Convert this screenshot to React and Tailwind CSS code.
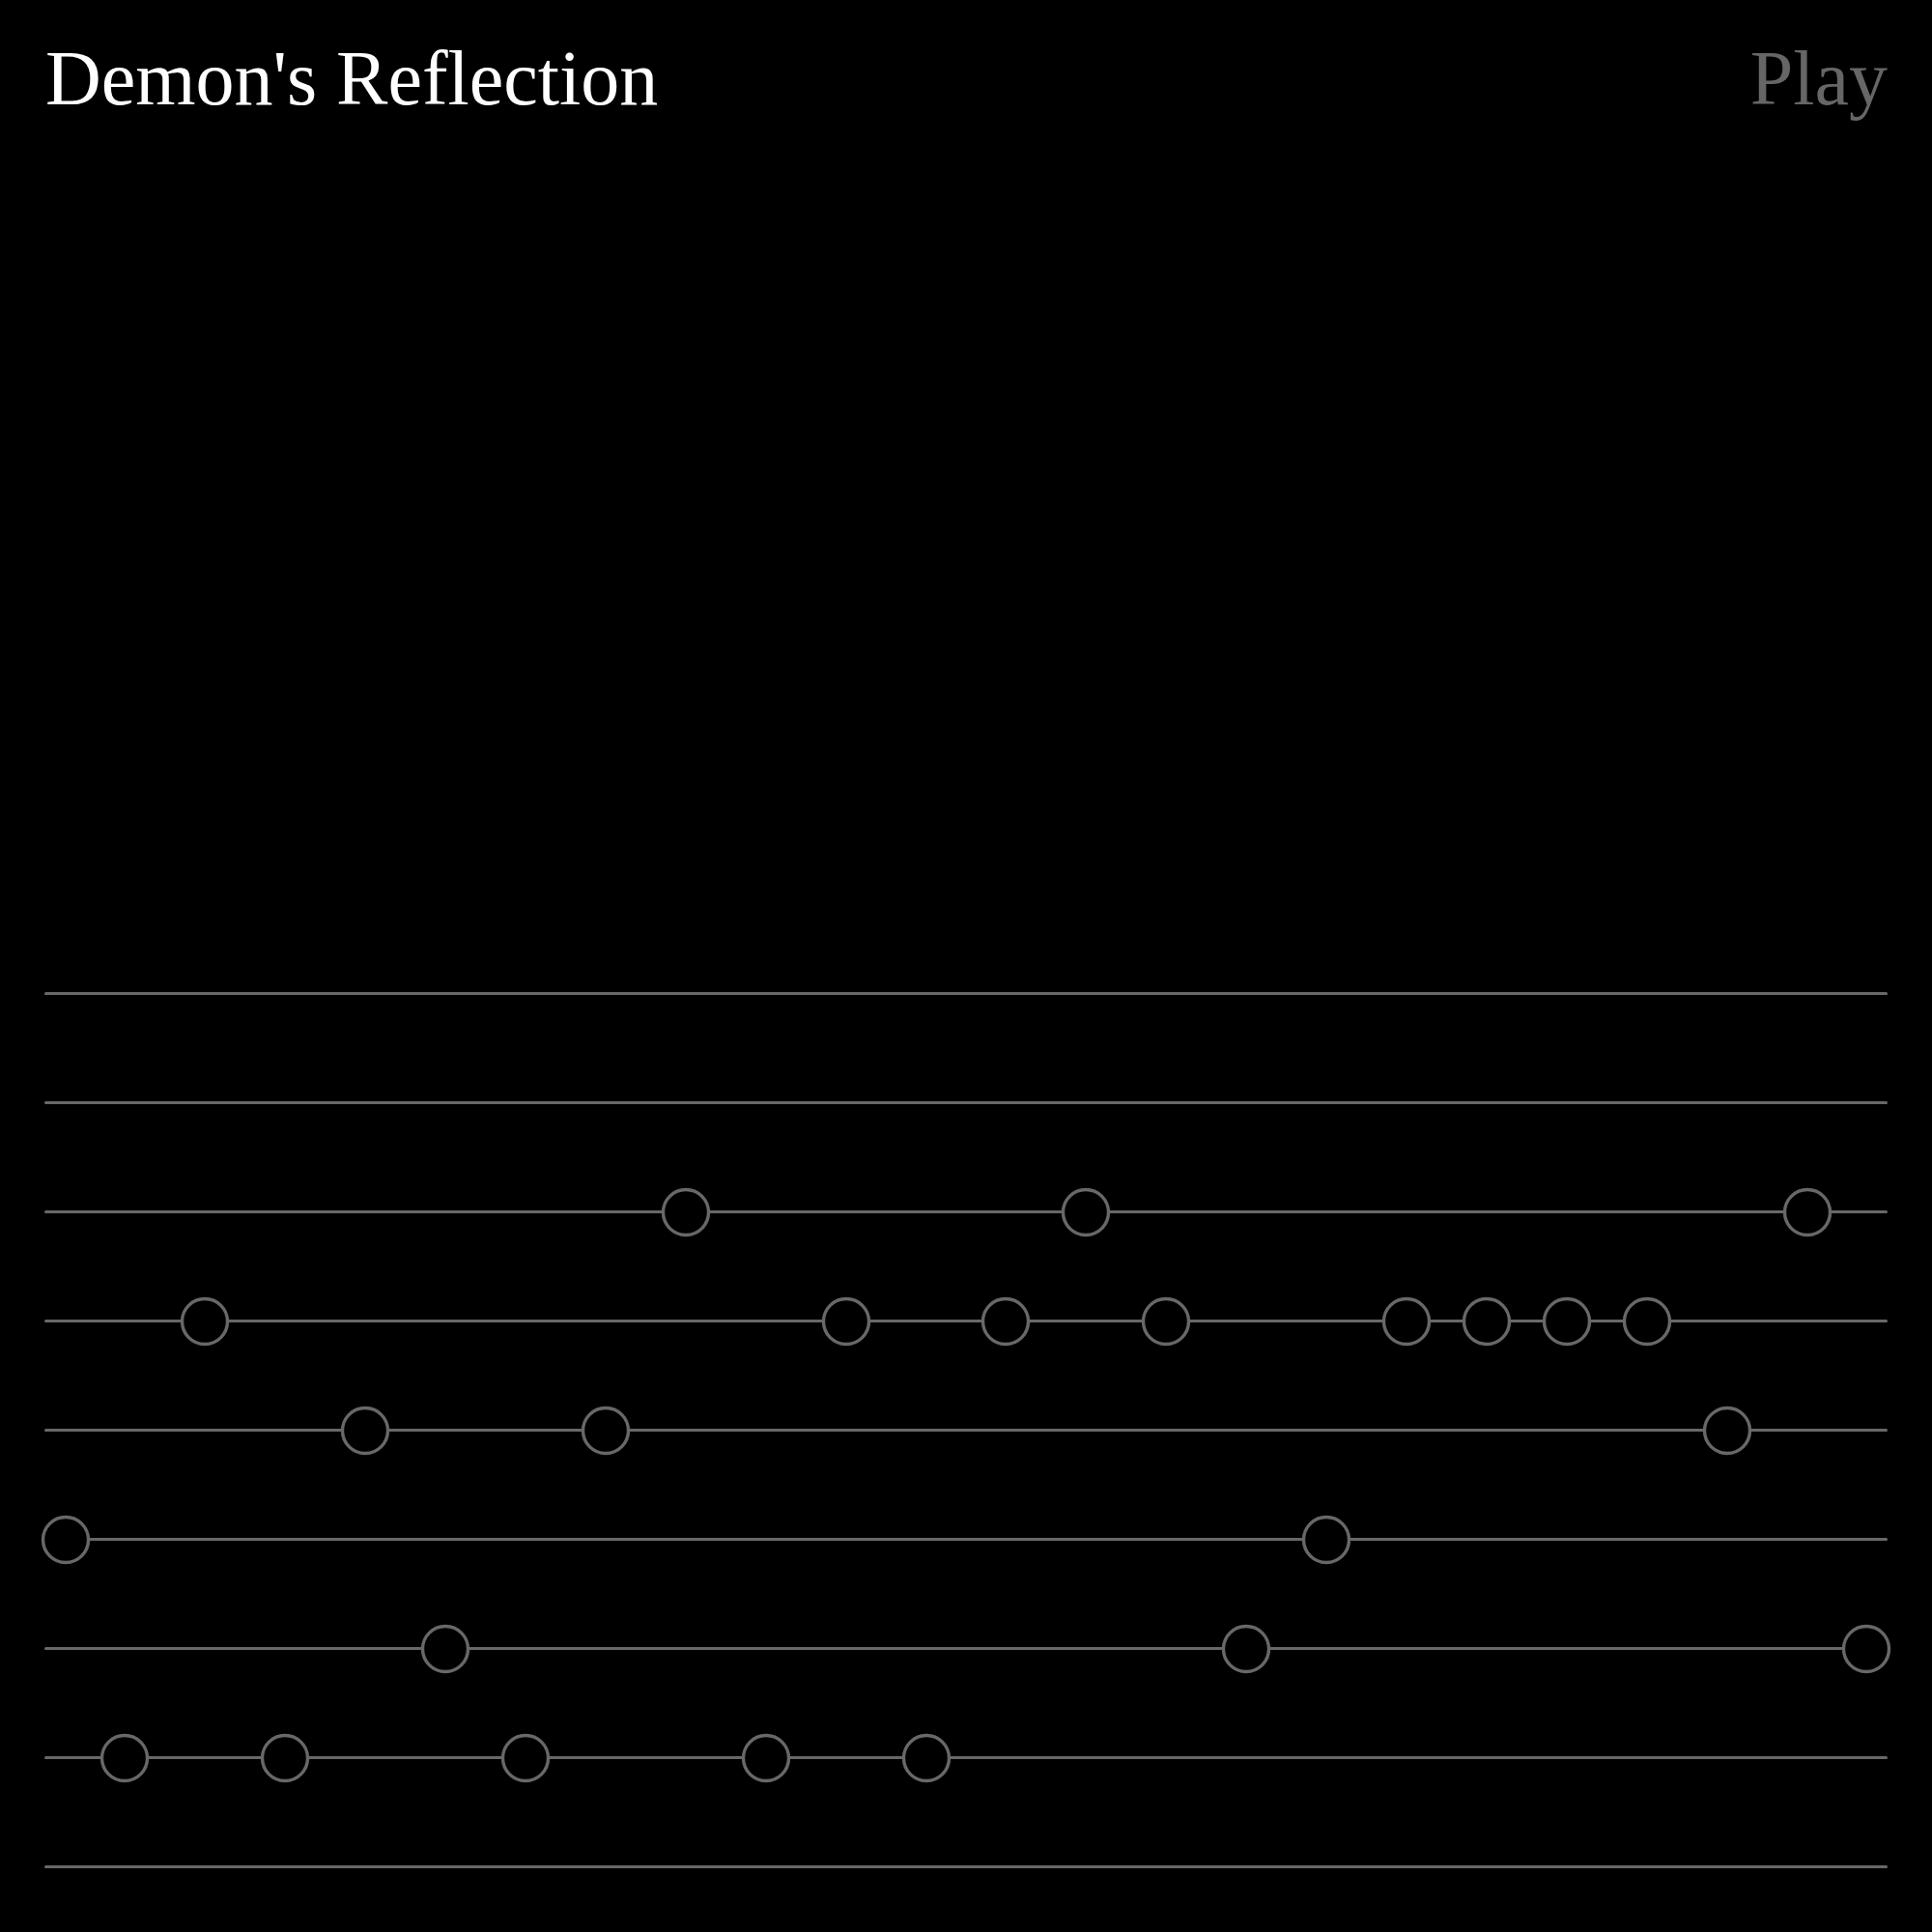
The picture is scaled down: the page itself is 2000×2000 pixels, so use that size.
const ROWS = [
    [],
    [],
    [8, 13, 22],
    [2, 10, 12, 14, 17, 18, 19, 20],
    [4, 7, 21],
    [0, 16],
    [5, 15, 23],
    [1, 3, 6, 9, 11],
    [],
];

const TRACK_WIDTH = 1908;
const STEPS = 24;
const STEP = TRACK_WIDTH / (STEPS - 1);
const EDGE = 22;

function stepX(k) {
    return Math.min(Math.max(k * STEP, EDGE), TRACK_WIDTH - EDGE);
}

function Track({ steps }) {
    return (
        <div className="relative h-[113px] flex items-center">
            <div className="w-full h-[3px] rounded-full bg-[#686868]" />
            {steps.map((k) => (
                <svg
                    key={k}
                    width="52"
                    height="52"
                    viewBox="0 0 52 52"
                    className="absolute top-1/2 -translate-x-1/2 -translate-y-1/2"
                    style={{ left: stepX(k) }}
                >
                    <circle cx="26" cy="26" r="23.5" fill="#000" stroke="#686868" strokeWidth="3.4" />
                </svg>
            ))}
        </div>
    );
}

export default function App() {
    return (
        <div className="w-[2000px] h-[2000px] bg-black flex flex-col px-[46px] font-['Liberation_Serif','Times_New_Roman',serif]">
            {/* Header */}
            <div className="flex items-start justify-between pt-[41px] pl-[1px]">
                <h1 className="text-[80px] leading-none text-white font-normal">Demon's Reflection</h1>
                <button className="text-[80px] leading-none text-[#666]">Play</button>
            </div>

            {/* Sequencer */}
            <div className="mt-auto pb-[11px] flex flex-col">
                {ROWS.map((steps, i) => (
                    <Track key={i} steps={steps} />
                ))}
            </div>
        </div>
    );
}
